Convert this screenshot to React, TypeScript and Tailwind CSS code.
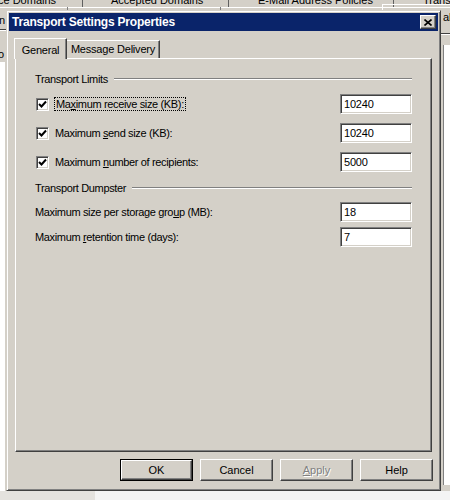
import type { JSX, ReactNode } from 'react'

const font = { fontFamily: '"Liberation Sans", Arial, sans-serif' }

const CheckMark = (): JSX.Element => (
  <svg width="9" height="9" viewBox="0 0 9 9" className="block">
    <path d="M1 4 L3.5 6.5 L8 1.5" fill="none" stroke="#000" strokeWidth="2" />
  </svg>
)

const CheckBox = (): JSX.Element => (
  <div className="flex h-[13px] w-[13px] items-center justify-center border border-t-[#808080] border-l-[#808080] border-r-white border-b-white bg-white shadow-[inset_1px_1px_0_#404040,inset_-1px_-1px_0_#d4d0c8]">
    <CheckMark />
  </div>
)

const TextBox = ({ value }: { value: string }): JSX.Element => (
  <div className="flex h-[20px] w-[72px] items-center border border-t-[#808080] border-l-[#808080] border-r-white border-b-white bg-white pl-[3px] text-[11px] tracking-[-0.2px] text-black shadow-[inset_1px_1px_0_#404040,inset_-1px_-1px_0_#d4d0c8]">
    {value}
  </div>
)

const GroupHeader = ({ title }: { title: string }): JSX.Element => (
  <div className="flex h-[14px] items-center gap-[6px]">
    <span className="whitespace-nowrap text-[11px] leading-[14px] tracking-[-0.35px] text-black">{title}</span>
    <div className="h-[2px] flex-1 border-t border-t-[#808080] border-b border-b-white" />
  </div>
)

const Row = ({ label, value, check }: { label: ReactNode; value: string; check?: boolean }): JSX.Element => (
  <div className="flex h-[20px] items-center justify-between">
    <div className="flex items-center">
      {check ? (
        <div className="ml-px mr-[6px]">
          <CheckBox />
        </div>
      ) : null}
      <span className="whitespace-nowrap text-[11px] leading-[14px] tracking-[-0.35px] text-black">{label}</span>
    </div>
    <TextBox value={value} />
  </div>
)

const Button = ({ children, def, disabled }: { children: ReactNode; def?: boolean; disabled?: boolean }): JSX.Element => (
  <div
    className={
      def
        ? 'flex h-[22px] w-[73px] items-center justify-center border border-black text-[11px]'
        : 'flex h-[22px] w-[73px] items-center justify-center text-[11px]'
    }
  >
    <div
      className={`flex h-full w-full items-center justify-center border border-t-white border-l-white border-r-[#404040] border-b-[#404040] bg-[#d4d0c8] shadow-[inset_-1px_-1px_0_#808080] ${
        disabled ? 'text-[#808080] [text-shadow:1px_1px_0_#fff]' : 'text-black'
      }`}
    >
      {children}
    </div>
  </div>
)

const Background = (): JSX.Element => (
  <>
    {/* tab strip of the window behind, cut off by the screenshot edge */}
    <div className="absolute left-0 top-[-8px] flex h-[16px] w-[450px] text-[11px] text-black">
      <span className="absolute left-[-2px] top-0">ce Domains</span>
      <span className="absolute left-[111px] top-0">Accepted Domains</span>
      <span className="absolute left-[258px] top-0">E-Mail Address Policies</span>
      <span className="absolute left-[423px] top-0">Trans</span>
    </div>
    <div className="absolute left-[82px] top-0 h-[8px] w-px bg-[#606060]" />
    <div className="absolute left-[228px] top-0 h-[8px] w-px bg-[#606060]" />
    <div className="absolute left-[393px] top-0 h-[8px] w-px bg-[#606060]" />
    <div className="absolute left-0 top-[7px] h-px w-[450px] bg-white" />
    <div className="absolute left-[67px] top-[7px] h-[3px] w-px bg-[#808080]" />
    <div className="absolute left-[220px] top-[7px] h-[3px] w-px bg-[#808080]" />
    <div className="absolute left-[382px] top-[4px] h-[8px] w-[68px] border-t border-l border-white" />

    {/* left strip */}
    <span className="absolute left-[-1px] top-[12px] text-[11px] text-black">n</span>
    <div className="absolute left-0 top-[29px] h-px w-[7px] bg-[#404040]" />
    <div className="absolute left-0 top-[30px] h-px w-[7px] bg-white" />
    <span className="absolute left-[-2px] top-[46px] text-[11px] text-black">o</span>
    <div className="absolute left-0 top-[62px] h-[430px] w-[5px] bg-white" />

    {/* right strip */}
    <span className="absolute left-[443px] top-[9px] text-[11px] text-black">al</span>
    <div className="absolute left-[441px] top-[33px] h-px w-[9px] bg-[#404040]" />
    <div className="absolute left-[441px] top-[34px] h-px w-[9px] bg-white" />
    <div className="absolute left-[443px] top-[45px] h-[440px] w-[7px] border-l border-[#808080] bg-white" />

    {/* below the dialog */}
    <div className="absolute left-0 top-[491px] h-[9px] w-[450px] bg-[#f4f4f4]" />
    <div className="absolute left-0 top-[491px] h-[9px] w-[95px] bg-[#e4e2de]" />
  </>
)

const App = (): JSX.Element => {
  return (
    <div className="relative h-[500px] w-[450px] overflow-hidden bg-[#d4d0c8]" style={font}>
      <Background />

      <div className="absolute left-[6px] top-[10px] flex h-[481px] w-[435px] flex-col border border-t-[#d4d0c8] border-l-[#d4d0c8] border-r-[#404040] border-b-[#404040] bg-[#d4d0c8] p-[2px] shadow-[inset_1px_1px_0_#fff,inset_-1px_-1px_0_#808080]">
        {/* title bar */}
        <div className="flex h-[18px] items-center justify-between bg-[#0a246a] pl-[3px] pr-[2px]">
          <span className="whitespace-nowrap text-[12px] font-bold leading-none tracking-[-0.2px] text-white">
            Transport Settings Properties
          </span>
          <div className="flex h-[14px] w-[16px] items-center justify-center border border-t-white border-l-white border-r-[#404040] border-b-[#404040] bg-[#d4d0c8] shadow-[inset_-1px_-1px_0_#808080]">
            <svg width="8" height="7" viewBox="0 0 8 7" className="block">
              <path d="M0.5 0.5 L7.5 6.5 M7.5 0.5 L0.5 6.5" stroke="#000" strokeWidth="1.6" />
            </svg>
          </div>
        </div>

        <div className="mt-[7px] flex flex-col px-[6px]">
          {/* tabs */}
          <div className="flex h-[20px] items-end">
            <div className="relative z-10 -mb-px -ml-px flex h-[21px] w-[53px] items-start justify-center border border-b-0 border-t-white border-l-white border-r-[#404040] bg-[#d4d0c8] pt-[3px] text-[11px] tracking-[-0.2px] text-black shadow-[inset_-1px_0_0_#808080]">
              General
            </div>
            <div className="flex h-[18px] w-[93px] items-center justify-center border border-b-0 border-t-white border-l-0 border-r-[#404040] bg-[#d4d0c8] text-[11px] tracking-[-0.2px] text-black shadow-[inset_-1px_0_0_#808080]">
              Message Delivery
            </div>
          </div>

          {/* panel */}
          <div className="flex h-[394px] flex-col border border-t-white border-l-white border-r-[#404040] border-b-[#404040] px-[19px] pt-[13px] shadow-[inset_-1px_-1px_0_#808080]">
            <GroupHeader title="Transport Limits" />
            <div className="mt-[8px] flex flex-col gap-[9px]">
              <Row
                check
                value="10240"
                label={
                  <span className="-ml-px border border-dotted border-black px-px">
                    Ma<u>x</u>imum receive size (KB):
                  </span>
                }
              />
              <Row
                check
                value="10240"
                label={
                  <>
                    Maximum <u>s</u>end size (KB):
                  </>
                }
              />
              <Row
                check
                value="5000"
                label={
                  <>
                    Maximum <u>n</u>umber of recipients:
                  </>
                }
              />
            </div>

            <div className="mt-[9px]">
              <GroupHeader title="Transport Dumpster" />
            </div>
            <div className="mt-[7px] flex flex-col gap-[5px]">
              <Row
                value="18"
                label={
                  <>
                    Maximum size per storage gro<u>u</u>p (MB):
                  </>
                }
              />
              <Row
                value="7"
                label={
                  <>
                    Maximum <u>r</u>etention time (days):
                  </>
                }
              />
            </div>
          </div>
        </div>

        {/* buttons */}
        <div className="mt-[7px] flex justify-end gap-[7px] pr-[5px]">
          <Button def>OK</Button>
          <Button>Cancel</Button>
          <Button disabled>
            <u>A</u>pply
          </Button>
          <Button>Help</Button>
        </div>
      </div>
    </div>
  )
}

export default App
